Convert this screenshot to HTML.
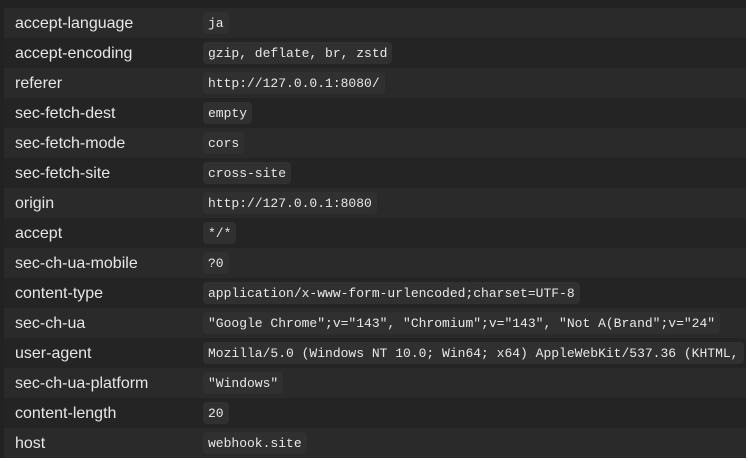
<!DOCTYPE html>
<html><head><style>
html,body{margin:0;padding:0;background:#fff;width:748px;height:461px;overflow:hidden}
.wrap{position:absolute;left:0;top:0;width:746px;height:458px;background:#222;overflow:hidden}
table{position:absolute;left:4px;top:8px;width:742px;border-collapse:collapse;table-layout:fixed}
tr{height:30px}
tr:nth-child(odd){background:#2a2a2a}
tr:nth-child(even){background:#242424}
td{padding:0;vertical-align:middle;white-space:nowrap;overflow:hidden}
td.k{padding-left:11px;padding-top:2px;font:16px "Liberation Sans",Arial,sans-serif;color:#e6e6e6}
code{display:inline-block;background:#303030;border-radius:4px;padding:4px 5px 3px;font:13px "Liberation Mono",monospace;color:#e8e8e8;line-height:15px}
</style></head><body><div class="wrap">
<table>
<colgroup><col style="width:199px"><col></colgroup>
<tr><td class="k">accept-language</td><td><code>ja</code></td></tr>
<tr><td class="k">accept-encoding</td><td><code>gzip, deflate, br, zstd</code></td></tr>
<tr><td class="k">referer</td><td><code>http://127.0.0.1:8080/</code></td></tr>
<tr><td class="k">sec-fetch-dest</td><td><code>empty</code></td></tr>
<tr><td class="k">sec-fetch-mode</td><td><code>cors</code></td></tr>
<tr><td class="k">sec-fetch-site</td><td><code>cross-site</code></td></tr>
<tr><td class="k">origin</td><td><code>http://127.0.0.1:8080</code></td></tr>
<tr><td class="k">accept</td><td><code>*/*</code></td></tr>
<tr><td class="k">sec-ch-ua-mobile</td><td><code>?0</code></td></tr>
<tr><td class="k">content-type</td><td><code>application/x-www-form-urlencoded;charset=UTF-8</code></td></tr>
<tr><td class="k">sec-ch-ua</td><td><code>"Google Chrome";v="143", "Chromium";v="143", "Not A(Brand";v="24"</code></td></tr>
<tr><td class="k">user-agent</td><td><code>Mozilla/5.0 (Windows NT 10.0; Win64; x64) AppleWebKit/537.36 (KHTML,</code></td></tr>
<tr><td class="k">sec-ch-ua-platform</td><td><code>"Windows"</code></td></tr>
<tr><td class="k">content-length</td><td><code>20</code></td></tr>
<tr><td class="k">host</td><td><code>webhook.site</code></td></tr>
</table></div></body></html>
